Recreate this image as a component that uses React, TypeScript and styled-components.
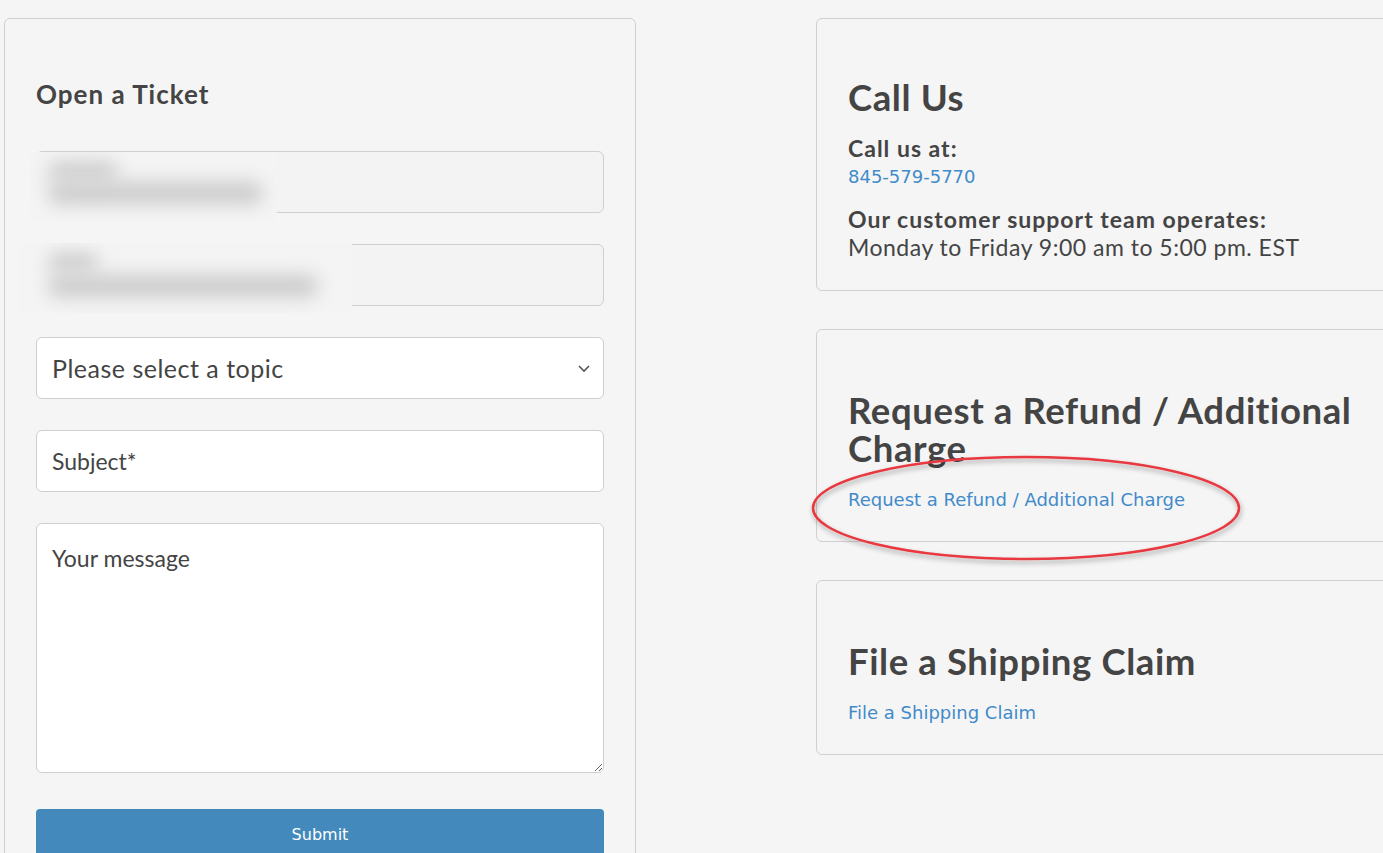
import React from 'react'
import styled, { createGlobalStyle } from 'styled-components'

const GlobalStyle = createGlobalStyle`
    html, body {
        margin: 0;
        padding: 0;
        background: #f5f5f5;
        overflow: hidden;
    }
    body {
        font-family: Lato, "Open Sans", sans-serif;
        color: #444;
    }
    * {
        box-sizing: border-box;
    }
`

const Page = styled.div`
    position: relative;
    display: flex;
    align-items: flex-start;
    gap: 180px;
    padding: 18px 0 0 4px;
    width: 1460px;
    height: 853px;
`

const Card = styled.section<{ $top?: number; $bottom?: number }>`
    width: 632px;
    flex-shrink: 0;
    border: 1px solid #d0d0d0;
    border-radius: 6px;
    background: #f5f5f5;
    padding: ${p => p.$top ?? 61}px 31px ${p => p.$bottom ?? 29}px;
`

const TicketCard = styled(Card)`
    min-height: 900px;
`

const SideColumn = styled.div`
    display: flex;
    flex-direction: column;
    gap: 38px;
`

const FormTitle = styled.h3`
    margin: 0 0 42px;
    font-size: 26px;
    line-height: 30px;
    font-weight: 700;
    letter-spacing: 1px;
`

const Heading = styled.h2<{ $gap?: number }>`
    margin: 0 0 ${p => p.$gap ?? 21}px;
    font-size: 36.5px;
    line-height: 38px;
    font-weight: 700;
    letter-spacing: 0.6px;
`

const Label = styled.p`
    margin: 0;
    font-size: 23px;
    line-height: 28px;
    font-weight: 700;
    letter-spacing: 1px;
`

const Text = styled.p`
    margin: 0;
    font-size: 23px;
    line-height: 28px;
    letter-spacing: 0.5px;
`

const LinkText = styled.a<{ $gap?: number }>`
    display: block;
    margin: 3px 0 ${p => p.$gap ?? 0}px;
    font-family: "DejaVu Sans", Verdana, sans-serif;
    font-size: 18px;
    line-height: 24px;
    color: #428bca;
    text-decoration: none;
`

const Field = styled.div`
    position: relative;
    margin-bottom: 31px;
`

const fieldBase = `
    display: block;
    width: 100%;
    border: 1px solid #cfcfcf;
    border-radius: 6px;
    padding: 0 15px;
    font-family: Lato, "Open Sans", sans-serif;
    font-size: 23px;
    color: #444;
    outline: none;
`

const Input = styled.input<{ $filled?: boolean }>`
    ${fieldBase}
    height: 62px;
    background: ${p => (p.$filled ? '#f3f3f3' : '#fff')};
    &::placeholder {
        color: #444;
        opacity: 1;
    }
`

const Select = styled.select`
    ${fieldBase}
    height: 62px;
    background: #fff;
    appearance: none;
    font-size: 25px;
    letter-spacing: 0.5px;
`

const Chevron = styled.svg`
    position: absolute;
    right: 14px;
    top: 26px;
    pointer-events: none;
`

const Message = styled.textarea`
    ${fieldBase}
    height: 250px;
    padding-top: 19px;
    background: #fff;
    resize: vertical;
    line-height: 30px;
    &::placeholder {
        color: #444;
        opacity: 1;
    }
`

const Blur = styled.div<{ $left: number; $top: number; $w: number; $h: number }>`
    position: absolute;
    left: ${p => p.$left}px;
    top: ${p => p.$top}px;
    width: ${p => p.$w}px;
    height: ${p => p.$h}px;
    background: #f4f4f4;
    overflow: hidden;
`

const BlurLine = styled.div<{ $left: number; $top: number; $w: number; $h: number }>`
    position: absolute;
    left: ${p => p.$left}px;
    top: ${p => p.$top}px;
    width: ${p => p.$w}px;
    height: ${p => p.$h}px;
    background: #cbcbcb;
    border-radius: 10px;
    filter: blur(9px);
`

const SubmitButton = styled.button`
    display: block;
    width: 100%;
    height: 60px;
    margin-top: 36px;
    border: none;
    border-radius: 4px;
    background: #4389bb;
    color: #fff;
    font-family: "DejaVu Sans", Verdana, sans-serif;
    font-size: 16px;
    padding-bottom: 10px;
`

const Annotation = styled.svg`
    position: absolute;
    left: 800px;
    top: 445px;
    pointer-events: none;
`

const App: React.FC = () => {
    return (
        <>
            <GlobalStyle />
            <Page>
                <TicketCard $top={60} $bottom={0}>
                    <FormTitle>Open a Ticket</FormTitle>
                    <Field>
                        <Input $filled readOnly />
                        <Blur $left={-6} $top={1} $w={247} $h={69}>
                            <BlurLine $left={18} $top={10} $w={70} $h={18} />
                            <BlurLine $left={18} $top={30} $w={215} $h={22} />
                        </Blur>
                    </Field>
                    <Field>
                        <Input $filled readOnly />
                        <Blur $left={-18} $top={-1} $w={334} $h={70}>
                            <BlurLine $left={30} $top={10} $w={50} $h={18} />
                            <BlurLine $left={30} $top={32} $w={270} $h={22} />
                        </Blur>
                    </Field>
                    <Field>
                        <Select defaultValue="">
                            <option value="">Please select a topic</option>
                        </Select>
                        <Chevron width="12" height="10" viewBox="0 0 12 10">
                            <path d="M1 3l5 5 5-5" fill="none" stroke="#555" strokeWidth="1.6" />
                        </Chevron>
                    </Field>
                    <Field>
                        <Input placeholder="Subject*" />
                    </Field>
                    <Message placeholder="Your message" />
                    <SubmitButton>Submit</SubmitButton>
                </TicketCard>

                <SideColumn>
                    <Card $top={59} $bottom={29}>
                        <Heading $gap={18}>Call Us</Heading>
                        <Label>Call us at:</Label>
                        <LinkText href="#" $gap={16}>845-579-5770</LinkText>
                        <Label>Our customer support team operates:</Label>
                        <Text>Monday to Friday 9:00 am to 5:00 pm. EST</Text>
                    </Card>
                    <Card>
                        <Heading>Request a Refund / Additional Charge</Heading>
                        <LinkText href="#">Request a Refund / Additional Charge</LinkText>
                    </Card>
                    <Card>
                        <Heading>File a Shipping Claim</Heading>
                        <LinkText href="#">File a Shipping Claim</LinkText>
                    </Card>
                </SideColumn>

                <Annotation width="460" height="130" viewBox="0 0 460 130">
                    <defs>
                        <filter id="shade" x="-10%" y="-30%" width="120%" height="160%">
                            <feDropShadow dx="1" dy="3" stdDeviation="2.5" floodColor="#000" floodOpacity="0.35" />
                        </filter>
                    </defs>
                    <ellipse cx="226" cy="63" rx="213" ry="51" fill="none" stroke="#e8393f" strokeWidth="2.5" filter="url(#shade)" />
                </Annotation>
            </Page>
        </>
    )
}

export default App
